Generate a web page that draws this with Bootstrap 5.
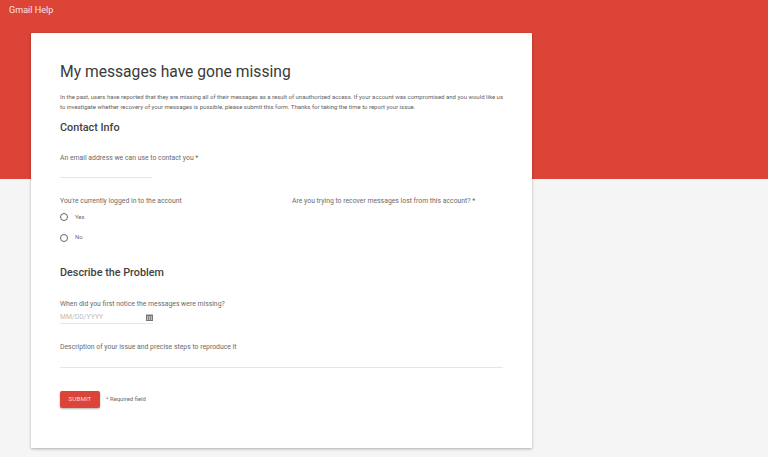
<!DOCTYPE html>
<html lang="en">
<head>
<meta charset="utf-8">
<title>Gmail Help</title>
<link rel="stylesheet" href="https://cdn.jsdelivr.net/npm/bootstrap@5.3.0/dist/css/bootstrap.min.css">
<style>
html, body { height: 457px; overflow: hidden; }
body { font-family: Roboto, "Liberation Sans", sans-serif; color: #616161; background: linear-gradient(#db4437 179px, #f5f5f5 179px); }
.top-brand { height: 33px; padding: 3px 0 0 9px; font-size: 9.1px; line-height: 15px; color: #fbe3e0; margin: 0; }
.form-sheet { width: 501px; height: 415px; margin-left: 31px; padding: 29px 30px 0 29px; background: #fff; border-radius: 1px; box-shadow: 0 1px 3px rgba(0,0,0,.3); }
.sheet-title { font-size: 15.65px; line-height: 19px; font-weight: 400; color: #3a3a3a; margin: 0; }
.sheet-intro { font-size: 6px; line-height: 9.5px; color: #616161; margin: 11px 0 0; white-space: nowrap; }
.sheet-section { font-size: 10.8px; line-height: 14px; font-weight: 500; color: #424242; margin: 0; }
.field-label { font-size: 6.85px; line-height: 9px; color: #6a6a6a; margin: 0; white-space: nowrap; }
.email-line { width: 92px; height: 1px; background: #e6e6e6; margin-top: 14px; }
.choice-row { display: flex; align-items: center; height: 8px; font-size: 5.9px; color: #6a6a6a; margin-top: 12.5px; }
.choice-first { margin-top: 7.5px; }
.radio-dot { width: 8px; height: 8px; border: 1px solid #666; border-radius: 50%; margin-right: 7px; flex: none; }
.date-field { width: 93px; height: 13px; margin-top: 2.5px; border-bottom: 1px solid #e6e6e6; font-size: 6.85px; line-height: 9px; color: #bdbdbd; }
.wide-line { height: 1px; background: #e6e6e6; width: 443px; margin-top: 15px; }
.submit-btn { width: 40px; height: 17px; padding: 0; border: 0; border-radius: 2px; background: #db4437; color: #fbd9d5; font-size: 6.2px; line-height: 17px; letter-spacing: .1px; box-shadow: 0 1px 2px rgba(0,0,0,.3); }
.required-note { font-size: 5.9px; color: #6a6a6a; margin-left: 6px; }
.left-col { width: 232px; }
.contact-head { margin-top: 9.5px; }
.email-label { margin-top: 19.5px; }
.account-row { margin-top: 18.5px; }
.problem-head { margin-top: 24.5px; }
.notice-label { margin-top: 19.5px; }
.steps-label { margin-top: 18.5px; }
.submit-row { margin-top: 23px; }
</style>
</head>
<body>
<p class="top-brand">Gmail Help</p>
<main class="form-sheet">
  <h1 class="sheet-title">My messages have gone missing</h1>
  <p class="sheet-intro">In the past, users have reported that they are missing all of their messages as a result of unauthorized access. If your account was compromised and you would like us<br>to investigate whether recovery of your messages is possible, please submit this form. Thanks for taking the time to report your issue.</p>
  <h2 class="sheet-section contact-head">Contact Info</h2>
  <p class="field-label email-label">An email address we can use to contact you *</p>
  <div class="email-line"></div>
  <div class="d-flex account-row">
    <div class="left-col">
      <p class="field-label">You're currently logged in to the account</p>
      <div class="choice-row choice-first"><span class="radio-dot"></span>Yes</div>
      <div class="choice-row"><span class="radio-dot"></span>No</div>
    </div>
    <div><p class="field-label">Are you trying to recover messages lost from this account? *</p></div>
  </div>
  <h2 class="sheet-section problem-head">Describe the Problem</h2>
  <p class="field-label notice-label">When did you first notice the messages were missing?</p>
  <div class="date-field d-flex justify-content-between align-items-center">
    <span>MM/DD/YYYY</span>
    <svg width="7" height="7" viewBox="0 0 7 7" aria-hidden="true"><path fill="#777" d="M0 .5h7V7H0z"/><path fill="#fff" d="M1 2.4h1.2v1.2H1zM2.9 2.4h1.2v1.2H2.9zM4.8 2.4H6v1.2H4.8zM1 4.4h1.2v1.2H1zM2.9 4.4h1.2v1.2H2.9zM4.8 4.4H6v1.2H4.8z"/></svg>
  </div>
  <p class="field-label steps-label">Description of your issue and precise steps to reproduce it</p>
  <div class="wide-line"></div>
  <div class="d-flex align-items-center submit-row">
    <button type="button" class="btn submit-btn">SUBMIT</button>
    <span class="required-note">* Required field</span>
  </div>
</main>
<script src="https://cdn.jsdelivr.net/npm/bootstrap@5.3.0/dist/js/bootstrap.bundle.min.js"></script>
</body>
</html>
